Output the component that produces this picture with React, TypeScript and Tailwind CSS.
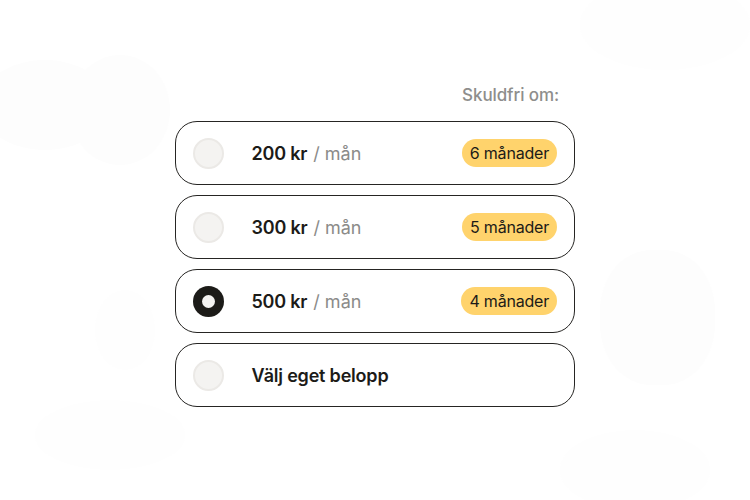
import React from 'react';

type Option = {
  amount: string;
  months?: string;
  selected?: boolean;
};

const options: Option[] = [
  { amount: '200 kr', months: '6 månader' },
  { amount: '300 kr', months: '5 månader' },
  { amount: '500 kr', months: '4 månader', selected: true },
  { amount: 'Välj eget belopp' },
];

const Radio = ({ selected }: { selected?: boolean }) =>
  selected ? (
    <span className="w-[31px] h-[31px] rounded-full bg-[#1c1b18] flex items-center justify-center shrink-0">
      <span className="w-[13px] h-[13px] rounded-full bg-[#f4f3f1]" />
    </span>
  ) : (
    <span className="w-[31px] h-[31px] rounded-full bg-[#f4f3f1] border-2 border-[#ebe9e6] shrink-0" />
  );

// faint background shapes
const Blobs = () => (
  <div className="absolute inset-0 pointer-events-none">
    <div className="absolute left-[-20px] top-[60px] w-[130px] h-[90px] rounded-[50%] bg-[#fdfdfd]" />
    <div className="absolute left-[70px] top-[55px] w-[100px] h-[110px] rounded-[50%] bg-[#fdfdfd]" />
    <div className="absolute left-[600px] top-[250px] w-[115px] h-[135px] rounded-[45%] bg-[#fdfdfd]" />
    <div className="absolute left-[580px] top-[-20px] w-[170px] h-[90px] rounded-[50%] bg-[#fefefe]" />
    <div className="absolute left-[35px] top-[400px] w-[150px] h-[70px] rounded-[50%] bg-[#fefefe]" />
    <div className="absolute left-[95px] top-[290px] w-[60px] h-[80px] rounded-[50%] bg-[#fefefe]" />
    <div className="absolute left-[560px] top-[430px] w-[150px] h-[80px] rounded-[50%] bg-[#fefefe]" />
  </div>
);

const App = () => {
  return (
    <div
      className="relative w-[750px] h-[500px] bg-white overflow-hidden"
      style={{ fontFamily: 'Inter, "Noto Sans", sans-serif' }}
    >
      <Blobs />
      <div className="relative w-[400px] ml-[175px] pt-[84px]">
        <div className="flex justify-end pr-[16px] h-[24px] items-center mb-[13px]">
          <span className="text-[17px] font-medium text-[#8e8e8c] tracking-[-0.1px]">Skuldfri om:</span>
        </div>
        <div className="flex flex-col gap-[10px]">
          {options.map((o) => (
            <div
              key={o.amount}
              className="h-[64px] rounded-[22px] border-[1.5px] border-[#262523] bg-white flex items-center pl-[16.5px] pr-[17px]"
            >
              <Radio selected={o.selected} />
              <div className="ml-[28px] flex-1 flex items-baseline text-[18px]">
                <span className="font-semibold text-[#1c1b18] tracking-[-0.2px]">{o.amount}</span>
                {o.months && <span className="ml-[6px] text-[#8b8b89]">/ mån</span>}
              </div>
              {o.months && (
                <span className="h-[28px] px-[8px] rounded-full bg-[#ffd36c] flex items-center text-[16px] text-[#1c1b18] tracking-[-0.2px]">
                  {o.months}
                </span>
              )}
            </div>
          ))}
        </div>
      </div>
    </div>
  );
};

export default App;
